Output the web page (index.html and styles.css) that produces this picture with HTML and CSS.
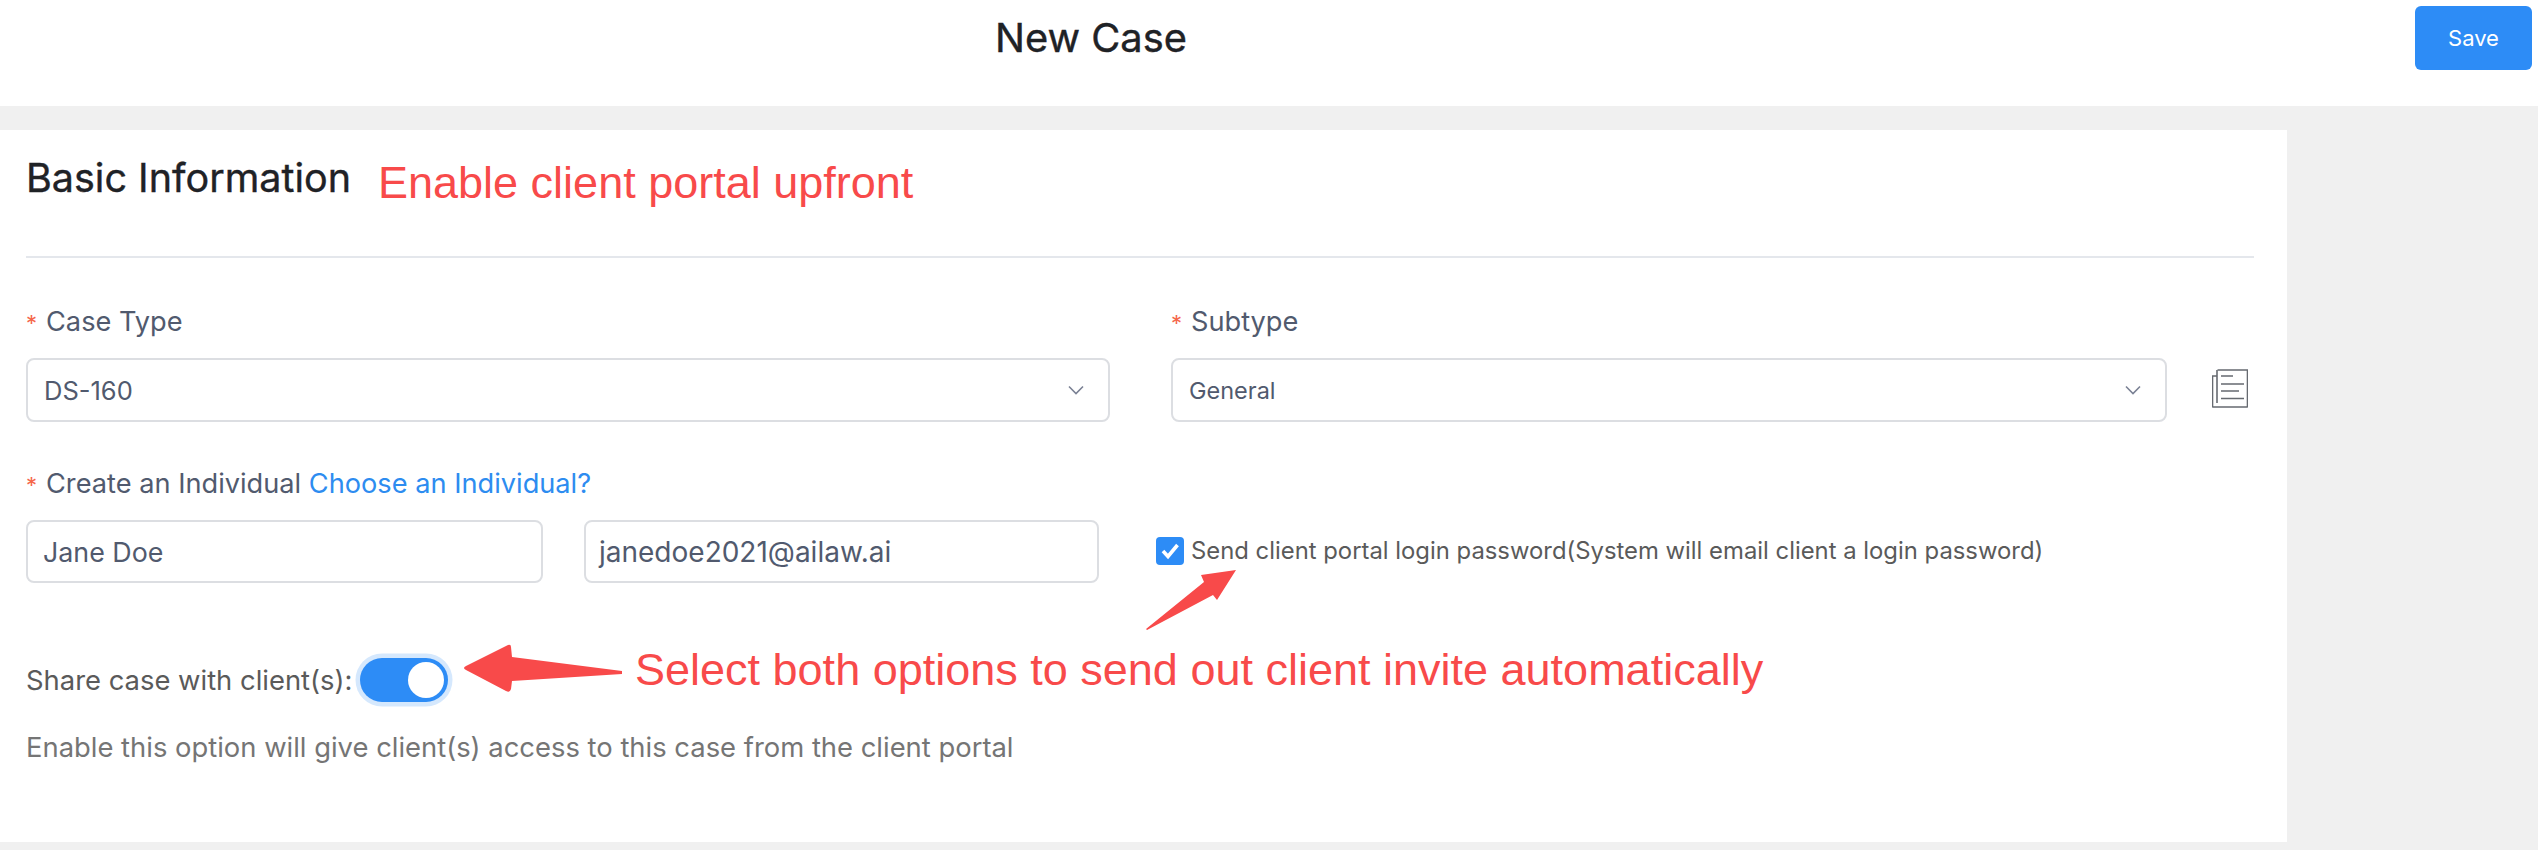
FILE: index.html
```html
<!DOCTYPE html>
<html lang="en">
<head>
<meta charset="utf-8">
<title>New Case</title>
<link rel="stylesheet" href="styles.css">
</head>
<body>
<header class="topbar">
  <h1 class="page-title">New Case</h1>
  <button class="save-btn" type="button">Save</button>
</header>
<main class="card">
  <h2 class="card-title">Basic Information</h2>
  <div class="form-grid">
    <div class="field case-type">
      <label class="label"><span class="req">*</span>Case Type</label>
      <div class="select"><span class="value-wide">DS-160</span>
        <svg class="chev" viewBox="0 0 16 10"><path d="M1 1.5 8 8.5 15 1.5" fill="none" stroke="#7a8194" stroke-width="1.6"/></svg>
      </div>
    </div>
    <div class="field subtype">
      <label class="label"><span class="req">*</span>Subtype</label>
      <div class="subtype-row">
        <div class="select"><span class="value">General</span>
          <svg class="chev" viewBox="0 0 16 10"><path d="M1 1.5 8 8.5 15 1.5" fill="none" stroke="#7a8194" stroke-width="1.6"/></svg>
        </div>
        <svg class="doc-icon" viewBox="0 0 36 39" fill="none" stroke="#666a70" stroke-width="1.6">
          <path d="M5.500 1h30v36a1 1 0 0 1-1 1H1.500a1 1 0 0 1-1-1V7h4.500"/>
          <path d="M5 1v33"/>
          <path d="M9 7h12M9 15h23M9 22h18M9 29.500h23"/>
        </svg>
      </div>
    </div>
  </div>
  <div class="individual">
    <label class="label"><span class="req">*</span>Create an Individual <a class="link">Choose an Individual?</a></label>
    <div class="individual-row">
      <div class="input name">Jane Doe</div>
      <div class="input email">janedoe2021@ailaw.ai</div>
      <div class="check-wrap">
        <span class="checkbox"><svg viewBox="0 0 28 28"><path d="M7 14 12 19.500 21.500 8" fill="none" stroke="#fff" stroke-width="3.600"/></svg></span>
        <span class="check-text">Send client portal login password(System will email client a login password)</span>
      </div>
    </div>
  </div>
  <div class="share-row">
    <span class="share-label">Share case with client(s):</span>
    <span class="toggle"><span class="knob"></span></span>
  </div>
  <p class="hint">Enable this option will give client(s) access to this case from the client portal</p>
</main>
<div class="note note-top">Enable client portal upfront</div>
<div class="note note-main">Select both options to send out client invite automatically</div>
<svg class="arrows" viewBox="0 0 2538 850">
  <path d="M466 666 508 645Q511 644 511 647L512 657 622 671V674L512 681 511 689Q510 693 506 691L466 670Q462 668 466 666Z" fill="#f84a4a"/>
  <path d="M1146 629 1204 582 1201 575 1236 570 1217 600 1213 595 1147 630Z" fill="#f84a4a"/>
</svg>
</body>
</html>
```

FILE: styles.css
```css
* { box-sizing: border-box; }
html, body { margin: 0; padding: 0; }
body {
  width: 2538px;
  height: 850px;
  position: relative;
  overflow: hidden;
  background: #f0f0f0;
  font-family: Inter, "Liberation Sans", sans-serif;
}
.topbar {
  height: 106px;
  background: #fff;
  padding: 6px 6px 0 995px;
  display: flex;
  justify-content: space-between;
  align-items: flex-start;
}
.page-title {
  margin: 9px 0 0;
  font-size: 39.800px;
  line-height: 46px;
  font-weight: 400;
  color: #1f2226;
  -webkit-text-stroke: 0.4px #1f2226;
}
.save-btn {
  width: 117px;
  height: 64px;
  border: 0;
  border-radius: 6px;
  background: #2d8cf6;
  color: #fff;
  font-family: Inter, sans-serif;
  font-size: 22px;
}
.card {
  width: 2287px;
  height: 712px;
  margin-top: 24px;
  background: #fff;
  padding: 26px 33px 0 26px;
}
.card-title {
  margin: 0;
  height: 102px;
  border-bottom: 2px solid #e4e7ec;
  font-size: 39.500px;
  line-height: 44px;
  font-weight: 400;
  color: #1f2226;
  -webkit-text-stroke: 0.4px #1f2226;
}
.form-grid {
  display: flex;
  gap: 61px;
  margin-top: 46px;
}
.case-type { width: 1084px; }
.subtype { flex: 1; }
.label {
  display: block;
  height: 36px;
  margin-bottom: 18px;
  font-size: 27.200px;
  line-height: 36px;
  color: #515a6e;
}
.req {
  display: inline-block;
  width: 20px;
  color: #f5664a;
  font-size: 22px;
}
.link { color: #2d8cf0; }
.select, .input {
  height: 64px;
  border: 2px solid #dcdee2;
  border-radius: 8px;
  background: #fff;
  color: #515a6e;
  display: flex;
  align-items: center;
}
.select {
  padding: 0 24px 0 16px;
  justify-content: space-between;
}
.value { font-size: 23.500px; }
.value-wide { font-size: 25.500px; }
.chev { width: 16px; height: 10px; }
.subtype-row { display: flex; align-items: center; gap: 45px; }
.subtype-row .select { width: 996px; }
.doc-icon { width: 36px; height: 39px; margin-bottom: 3px; }
.individual { margin-top: 44px; }
.individual-row {
  display: flex;
  align-items: center;
}
.input {
  height: 63px;
  padding: 0 13px;
  font-size: 28px;
}
.name { width: 517px; padding-left: 15px; font-size: 26.800px; }
.email { width: 515px; margin-left: 41px; }
.check-wrap {
  display: flex;
  align-items: center;
  gap: 7px;
  margin-left: 57px;
  margin-top: -2px;
}
.checkbox {
  width: 28px;
  height: 28px;
  border-radius: 4px;
  background: #2d8cf6;
  display: block;
}
.checkbox svg { display: block; width: 28px; height: 28px; }
.check-text {
  font-size: 23.850px;
  color: #5a5a5a;
}
.share-row {
  display: flex;
  align-items: center;
  margin-top: 70px;
  height: 53px;
}
.share-label {
  font-size: 27.400px;
  color: #5a5a5a;
}
.toggle {
  margin-left: 8px;
  width: 88px;
  height: 44px;
  border-radius: 22px;
  background: #2d8cf6;
  box-shadow: 0 0 0 4.500px #d5e8fd;
  position: relative;
  display: block;
}
.knob {
  position: absolute;
  right: 4px;
  top: 4px;
  width: 36px;
  height: 36px;
  border-radius: 50%;
  background: #fff;
}
.hint {
  margin: 24px 0 0;
  font-size: 27.400px;
  line-height: 34px;
  color: #757575;
}
.note {
  position: absolute;
  color: #f84a4a;
  white-space: nowrap;
  font-family: "Liberation Sans", Arial, sans-serif;
  font-size: 45px;
  line-height: 50px;
}
.note-top { left: 378px; top: 158px; }
.note-main { left: 635px; top: 645px; }
.arrows {
  position: absolute;
  left: 0;
  top: 0;
  width: 2538px;
  height: 850px;
  pointer-events: none;
}
```
